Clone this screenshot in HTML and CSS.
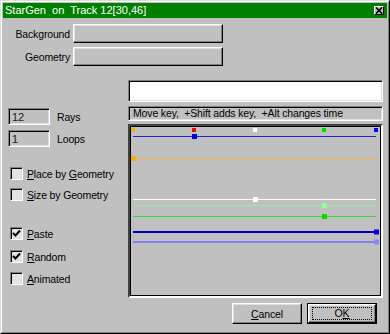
FILE: index.html
```html
<!DOCTYPE html>
<html>
<head>
<meta charset="utf-8">
<link rel="stylesheet" href="styles.css">
</head>
<body>
<div class="window">
  <div class="frame">
    <div class="titlebar">
      <span class="title">StarGen&nbsp; on&nbsp; Track 12[30,46]</span>
      <span class="close">
        <svg width="8" height="7" viewBox="0 0 8 7"><path d="M1 0.5 L7 6.5 M7 0.5 L1 6.5" stroke="#000" stroke-width="1.6"/></svg>
      </span>
    </div>
    <div class="content">
      <div class="row row-first">
        <span class="lbl">Background</span>
        <div class="btn wide"></div>
      </div>
      <div class="row row-second">
        <span class="lbl">Geometry</span>
        <div class="btn wide"></div>
      </div>
      <div class="main">
        <div class="left">
          <div class="field-row"><div class="field">12</div><span class="field-lbl">Rays</span></div>
          <div class="field-row loops"><div class="field">1</div><span class="field-lbl">Loops</span></div>
          <div class="check c-place"><span class="box"></span><span><u>P</u>lace by <u>G</u>eometry</span></div>
          <div class="check c-size"><span class="box"></span><span><u>S</u>ize by Geometry</span></div>
          <div class="check c-paste"><span class="box"><svg width="9" height="9" viewBox="0 0 9 9"><path d="M1 4 L3.5 6.5 L8 1.5" fill="none" stroke="#000" stroke-width="2"/></svg></span><span><u>P</u>aste</span></div>
          <div class="check c-random"><span class="box"><svg width="9" height="9" viewBox="0 0 9 9"><path d="M1 4 L3.5 6.5 L8 1.5" fill="none" stroke="#000" stroke-width="2"/></svg></span><span><u>R</u>andom</span></div>
          <div class="check c-anim"><span class="box"></span><span><u>A</u>nimated</span></div>
        </div>
        <div class="right">
          <div class="whitefield"></div>
          <div class="status">Move key,&nbsp; +Shift adds key,&nbsp; +Alt changes time</div>
          <div class="graph">
            <svg width="251" height="170" viewBox="0 0 251 170">
              <rect x="1" y="2" width="4" height="4" fill="#f8b000"/>
              <rect x="62" y="2" width="4" height="4" fill="#ff0000"/>
              <rect x="123" y="2" width="4" height="4" fill="#ffffff"/>
              <rect x="192" y="2" width="4" height="4" fill="#00e000"/>
              <rect x="244" y="2" width="4" height="4" fill="#0000ff"/>

              <line x1="3" y1="10.5" x2="246" y2="10.5" stroke="#2020d0" stroke-width="1"/>
              <rect x="62" y="8" width="5" height="5" fill="#0000e0"/>

              <line x1="3" y1="32.5" x2="246" y2="32.5" stroke="#e8b840" stroke-width="1"/>
              <rect x="1" y="30" width="5" height="5" fill="#f8b000"/>

              <line x1="3" y1="73.5" x2="246" y2="73.5" stroke="#ffffff" stroke-width="1"/>
              <rect x="123" y="71" width="5" height="5" fill="#ffffff"/>

              <line x1="3" y1="79.5" x2="246" y2="79.5" stroke="#90f090" stroke-width="1"/>
              <rect x="192" y="77" width="5" height="5" fill="#90ff90"/>

              <line x1="3" y1="90.5" x2="246" y2="90.5" stroke="#30e030" stroke-width="1"/>
              <rect x="192" y="88" width="5" height="5" fill="#00e000"/>

              <line x1="3" y1="106" x2="246" y2="106" stroke="#0000c0" stroke-width="2"/>
              <rect x="244" y="103.5" width="5" height="5" fill="#0000e0"/>

              <line x1="3" y1="116" x2="246" y2="116" stroke="#8080f0" stroke-width="2"/>
              <rect x="244" y="113.5" width="5" height="5" fill="#8888f8"/>
            </svg>
          </div>
        </div>
      </div>
      <div class="footer">
        <div class="btn push"><span><u>C</u>ancel</span></div>
        <div class="default"><div class="btn push"><span class="focus">O<u>K</u></span></div></div>
      </div>
    </div>
  </div>
</div>
</body>
</html>
```

FILE: styles.css
```css
html, body {
  margin: 0;
  padding: 0;
  background: #c0c0c0;
}

.window {
  width: 390px;
  height: 334px;
  box-sizing: border-box;
  border: 1px solid;
  border-color: #dfdfdf #000 #000 #dfdfdf;
  background: #c0c0c0;
  font-family: "Liberation Sans", Arial, sans-serif;
  font-size: 10.5px;
  letter-spacing: -0.15px;
  color: #000;
}

.frame {
  height: 100%;
  box-sizing: border-box;
  border: 1px solid;
  border-color: #fff #808080 #808080 #fff;
  padding: 1px;
  display: flex;
  flex-direction: column;
}

.titlebar {
  height: 15px;
  background: #008000;
  display: flex;
  align-items: center;
  justify-content: space-between;
  padding: 0 3px 0 2px;
  flex: none;
}

.title {
  color: #fff;
  font-size: 11px;
  letter-spacing: 0;
  line-height: 15px;
}

.close {
  width: 10px;
  height: 9px;
  box-sizing: border-box;
  background: #c0c0c0;
  border: 1px solid;
  border-color: #fff #000 #000 #fff;
  display: flex;
  align-items: center;
  justify-content: center;
}

.close svg { display: block; }

.content {
  padding: 0 4px 0 5px;
  display: flex;
  flex-direction: column;
}

.row {
  display: flex;
  align-items: center;
}

.row-first { margin-top: 6px; }
.row-second { margin-top: 4px; }

.lbl {
  width: 62px;
  text-align: right;
  margin-right: 3px;
}

.btn {
  box-sizing: border-box;
  background: #c0c0c0;
  border: 1px solid;
  border-color: #fff #000 #000 #fff;
  box-shadow: inset -1px -1px 0 #808080, inset 1px 1px 0 #dfdfdf;
}

.wide {
  width: 150px;
  height: 19px;
}

.main {
  display: flex;
  margin-top: 14px;
}

.left {
  width: 120px;
  display: flex;
  flex-direction: column;
  padding-top: 28px;
}

.field-row {
  display: flex;
  align-items: center;
}

.field-row.loops { margin-top: 5px; }

.field {
  width: 42px;
  height: 17px;
  box-sizing: border-box;
  border: 1px solid;
  border-color: #808080 #fff #fff #808080;
  box-shadow: inset 1px 1px 0 #000, inset -1px -1px 0 #dfdfdf;
  padding: 2px 0 0 3px;
  line-height: 13px;
  font-size: 11px;
  color: #202020;
}

.field-lbl {
  margin-left: 7px;
}

.check {
  display: flex;
  align-items: center;
  padding-left: 2px;
  height: 13px;
}

.c-place { margin-top: 20px; }
.c-size { margin-top: 8px; }
.c-paste { margin-top: 26px; }
.c-random { margin-top: 10px; }
.c-anim { margin-top: 9px; }

.box {
  width: 13px;
  height: 13px;
  box-sizing: border-box;
  border: 1px solid;
  border-color: #808080 #fff #fff #808080;
  box-shadow: inset 1px 1px 0 #000, inset -1px -1px 0 #dfdfdf;
  background: #e4e4e4;
  margin-right: 4px;
  display: flex;
  align-items: center;
  justify-content: center;
}

.box svg { display: block; }

.right {
  width: 255px;
  display: flex;
  flex-direction: column;
}

.whitefield {
  height: 22px;
  box-sizing: border-box;
  background: #fff;
  border: 1px solid;
  border-color: #808080 #fff #fff #808080;
  box-shadow: inset 1px 1px 0 #000, inset -1px -1px 0 #dfdfdf;
}

.status {
  margin-top: 4px;
  height: 15px;
  box-sizing: border-box;
  border: 1px solid;
  border-color: #808080 #fff #fff #808080;
  box-shadow: inset 1px 1px 0 #000, inset -1px -1px 0 #dfdfdf;
  padding-left: 4px;
  line-height: 13px;
  white-space: nowrap;
}

.graph {
  margin-top: 3px;
  height: 174px;
  box-sizing: border-box;
  border: 2px solid;
  border-color: #404040 #fff #fff #404040;
  box-shadow: inset 1px 1px 0 #000, inset -1px -1px 0 #000;
  overflow: hidden;
}

.graph svg { display: block; }

.footer {
  display: flex;
  justify-content: flex-end;
  gap: 5px;
  margin-top: 5px;
  margin-right: 6px;
}

.push {
  width: 70px;
  height: 21px;
  display: flex;
  align-items: center;
  justify-content: center;
}

.default {
  border: 1px solid #000;
  width: 70px;
  height: 21px;
  box-sizing: border-box;
}

.default .push {
  width: 68px;
  height: 19px;
}

.focus {
  width: 58px;
  height: 11px;
  border: 1px dotted #000;
  display: flex;
  align-items: center;
  justify-content: center;
  line-height: 11px;
}
```
